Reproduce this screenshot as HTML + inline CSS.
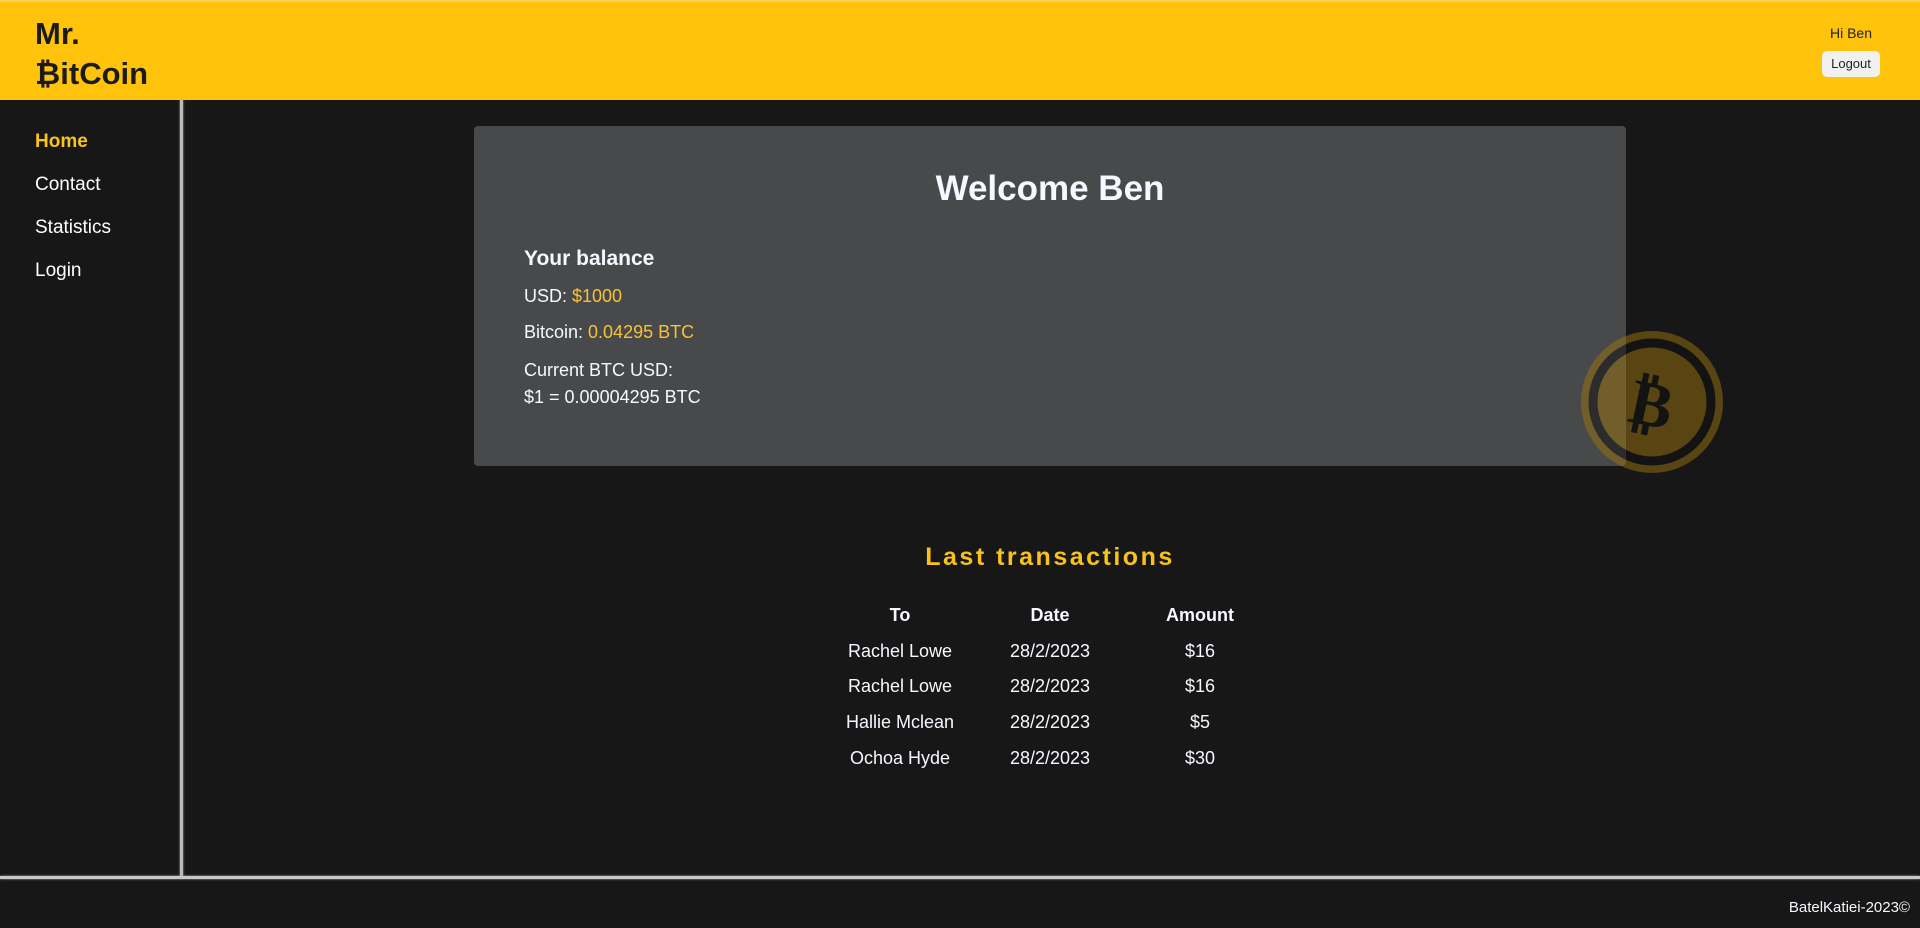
<!DOCTYPE html>
<html><head><meta charset="utf-8"><style>
*{margin:0;padding:0;box-sizing:border-box}
body{width:1920px;height:928px;background:#171717;font-family:"Liberation Sans",sans-serif;color:#f5f8ff;position:relative;overflow:hidden}
.hdr{position:absolute;left:0;top:0;width:1920px;height:100px;background:#ffc30b;border-top:2px solid #f7cf5a}
.logo{position:absolute;left:35px;top:12px;font-size:31px;font-weight:bold;color:#1b1b1b;line-height:40px}
.hi{position:absolute;top:24px;font-size:14px;color:#222;text-align:center;width:70px}
.lo{position:absolute;left:1822px;top:49px;width:58px;height:26px;background:#f1f1f1;border-radius:5px;font-size:13px;color:#222;text-align:center;line-height:26px}
.vline{position:absolute;left:180px;top:100px;width:3px;height:778px;background:#bbb;box-shadow:0 0 2px #aaa}
.hline{position:absolute;left:0;top:876px;width:1920px;height:3px;background:#c8c8c8;box-shadow:0 0 2px #aaa}
.nav{position:absolute;left:35px;font-size:19px;color:#fff}
.card{position:absolute;left:474px;top:126px;width:1152px;height:340px;background:#48494b;border-radius:4px}
.t{position:absolute;font-size:18px;color:#f5f8ff;white-space:nowrap}
.y{color:#f9c236}
.col{position:absolute;width:160px;text-align:center;font-size:18px;white-space:nowrap}
</style></head><body>
<div class="hdr"><div class="logo">Mr.<br>₿itCoin</div>
<div class="hi" style="left:1816px;top:23px">Hi Ben</div>
<div class="lo">Logout</div></div>
<div class="vline"></div><div class="hline"></div>
<div class="nav" style="top:131px;color:#f6c51b;font-weight:bold">Home</div>
<div class="nav" style="top:174px">Contact</div>
<div class="nav" style="top:217px">Statistics</div>
<div class="nav" style="top:260px">Login</div>
<div class="card"></div>
<div class="t" style="left:0;width:2100px;text-align:center;top:169px;font-size:35px;font-weight:bold">Welcome Ben</div>
<div class="t" style="left:524px;top:247px;font-size:21px;font-weight:bold">Your balance</div>
<div class="t" style="left:524px;top:286px">USD: <span class="y">$1000</span></div>
<div class="t" style="left:524px;top:322px">Bitcoin: <span class="y">0.04295 BTC</span></div>
<div class="t" style="left:524px;top:357px;line-height:27px">Current BTC USD:<br>$1 = 0.00004295 BTC</div>
<svg style="position:absolute;left:1580px;top:330px" width="144" height="144" viewBox="0 0 144 144">
<g opacity="0.5"><circle cx="72" cy="72" r="71" fill="#9a740c"/><circle cx="72" cy="72" r="59" fill="none" stroke="#111" stroke-width="9"/>
<text x="72" y="96" text-anchor="middle" font-family="DejaVu Sans" font-weight="bold" font-size="64" fill="#111" transform="rotate(12 72 72)">₿</text></g></svg>
<div class="t" style="left:0;width:2100px;text-align:center;top:543px;font-size:25px;font-weight:bold;color:#f8c21a;letter-spacing:2.5px">Last transactions</div>
<div class="col" style="left:820px;top:605px;font-weight:bold">To</div>
<div class="col" style="left:970px;top:605px;font-weight:bold">Date</div>
<div class="col" style="left:1120px;top:605px;font-weight:bold">Amount</div>
<div class="col" style="left:820px;top:641px">Rachel Lowe</div><div class="col" style="left:970px;top:641px">28/2/2023</div><div class="col" style="left:1120px;top:641px">$16</div>
<div class="col" style="left:820px;top:676px">Rachel Lowe</div><div class="col" style="left:970px;top:676px">28/2/2023</div><div class="col" style="left:1120px;top:676px">$16</div>
<div class="col" style="left:820px;top:712px">Hallie Mclean</div><div class="col" style="left:970px;top:712px">28/2/2023</div><div class="col" style="left:1120px;top:712px">$5</div>
<div class="col" style="left:820px;top:748px">Ochoa Hyde</div><div class="col" style="left:970px;top:748px">28/2/2023</div><div class="col" style="left:1120px;top:748px">$30</div>
<div class="t" style="right:10px;top:899px;font-size:15px">BatelKatiei-2023©</div>
</body></html>
